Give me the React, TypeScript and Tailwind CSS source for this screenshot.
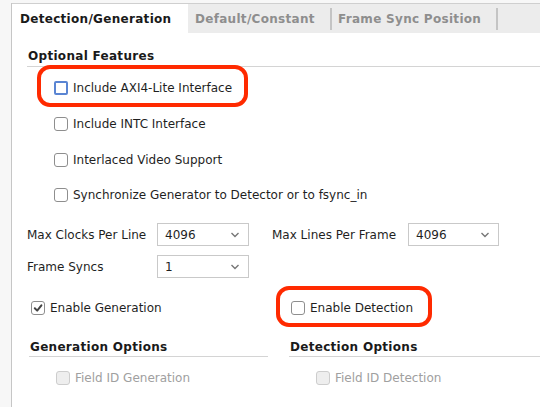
import React from "react";

function Check({ kind = "normal" }: { kind?: "normal" | "focused" | "checked" | "disabled" }) {
  if (kind === "focused")
    return <span className="w-[14px] h-[14px] shrink-0 rounded-[2px] border-2 border-[#5a85d3] bg-white" />;
  if (kind === "disabled")
    return <span className="w-[14px] h-[14px] shrink-0 rounded-[3px] border border-[#cdcdcd] bg-[#eeeeee]" />;
  if (kind === "checked")
    return (
      <span className="w-[14px] h-[14px] shrink-0 rounded-[3px] border border-[#8e8e8e] bg-white flex items-center justify-center">
        <svg width="10" height="10" viewBox="0 0 10 10">
          <path d="M1.8 5.2 L4.2 7.6 L8.4 2.4" fill="none" stroke="#444" strokeWidth="2" strokeLinecap="round" strokeLinejoin="round" />
        </svg>
      </span>
    );
  return <span className="w-[14px] h-[14px] shrink-0 rounded-[3px] border border-[#8e8e8e] bg-white" />;
}

function Select({ value, w }: { value: string; w: string }) {
  return (
    <div className={`${w} h-[23px] shrink-0 border border-[#c9c9c9] bg-white flex items-center justify-between pl-[7px] pr-[8px]`}>
      <span>{value}</span>
      <svg width="10" height="6" viewBox="0 0 10 6">
        <polyline points="1.5,1 5,4.5 8.5,1" fill="none" stroke="#777" strokeWidth="1.4" />
      </svg>
    </div>
  );
}

export default function App() {
  return (
    <div className="w-[540px] h-[407px] overflow-hidden relative flex bg-[#f7f7f7] font-['DejaVu_Sans',sans-serif] text-[12px] leading-[14px] text-[#1f1f1f]">
      <div className="w-[12px] shrink-0 border-r border-[#c6c6c6] bg-[#f7f7f7] mt-[3px]" />
      <div className="flex-1 flex flex-col mt-[3px] border-t border-[#cfcfcf] bg-white">
        {/* Tabs */}
        <div className="h-[29px] shrink-0 flex bg-[#ececec] tracking-[0.3px]">
          <div className="w-[176px] bg-white pl-[8px] flex items-center font-bold text-[#1a1a1a]">Detection/Generation</div>
          <div className="w-[142px] pl-[7px] flex items-center font-bold text-[#8e8e8e]">Default/Constant</div>
          <div className="self-center h-[22px] w-[2px] bg-[#c4c4c4]" />
          <div className="w-[164px] pl-[6px] flex items-center font-bold text-[#8e8e8e]">Frame Sync Position</div>
          <div className="self-center h-[22px] w-[2px] bg-[#c4c4c4]" />
        </div>

        {/* Optional Features */}
        <div className="ml-[15px] pt-[16px] pb-[3px] pl-[1px] border-b border-[#d4d4d4] font-bold text-[#1a1a1a] tracking-[0.3px]">Optional Features</div>
        <div className="mt-[3px] flex flex-col pl-[42px]">
          <div className="h-[36px] flex items-center gap-[5px]"><Check kind="focused" /><span>Include AXI4-Lite Interface</span></div>
          <div className="h-[36px] flex items-center gap-[5px]"><Check /><span>Include INTC Interface</span></div>
          <div className="h-[35px] flex items-center gap-[5px]"><Check /><span>Interlaced Video Support</span></div>
          <div className="h-[36px] flex items-center gap-[5px]"><Check /><span>Synchronize Generator to Detector or to fsync_in</span></div>
        </div>

        {/* Selects */}
        <div className="mt-[10px] flex items-center pl-[15px] h-[23px]">
          <span className="w-[130px] shrink-0">Max Clocks Per Line</span>
          <Select value="4096" w="w-[92px]" />
          <span className="ml-[23px] w-[136px] shrink-0">Max Lines Per Frame</span>
          <Select value="4096" w="w-[91px]" />
        </div>
        <div className="mt-[9px] flex items-center pl-[15px] h-[23px]">
          <span className="w-[130px] shrink-0">Frame Syncs</span>
          <Select value="1" w="w-[92px]" />
        </div>

        {/* Two columns */}
        <div className="mt-[18px] flex pl-[17px]">
          <div className="w-[260px] shrink-0 flex flex-col">
            <div className="h-[24px] flex items-center gap-[5px] pl-[2px]"><Check kind="checked" /><span>Enable Generation</span></div>
            <div className="mt-[20px] w-[239px] pb-[2px] pl-[1px] border-b border-[#d4d4d4] font-bold text-[#1a1a1a] tracking-[0.3px]">Generation Options</div>
            <div className="mt-[3px] flex flex-col pl-[27px] text-[#a0a0a0]">
              <div className="h-[36px] flex items-center gap-[5px]"><Check kind="disabled" /><span>Field ID Generation</span></div>
              <div className="h-[36px] flex items-center gap-[5px]"><Check kind="disabled" /></div>
            </div>
          </div>
          <div className="flex-1 flex flex-col">
            <div className="h-[24px] flex items-center gap-[5px] pl-[2px]"><Check /><span>Enable Detection</span></div>
            <div className="mt-[20px] pb-[2px] pl-[1px] border-b border-[#d4d4d4] font-bold text-[#1a1a1a] tracking-[0.3px]">Detection Options</div>
            <div className="mt-[3px] flex flex-col pl-[27px] text-[#a0a0a0]">
              <div className="h-[36px] flex items-center gap-[5px]"><Check kind="disabled" /><span>Field ID Detection</span></div>
              <div className="h-[36px] flex items-center gap-[5px]"><Check kind="disabled" /></div>
            </div>
          </div>
        </div>
      </div>

      {/* Red annotation outlines */}
      <div className="absolute left-[37px] top-[65px] w-[211px] h-[42px] border-[4px] border-[#ff2a00] rounded-[13px] pointer-events-none" />
      <div className="absolute left-[276px] top-[286px] w-[156px] h-[41px] border-[4px] border-[#ff2a00] rounded-[13px] pointer-events-none" />
    </div>
  );
}
